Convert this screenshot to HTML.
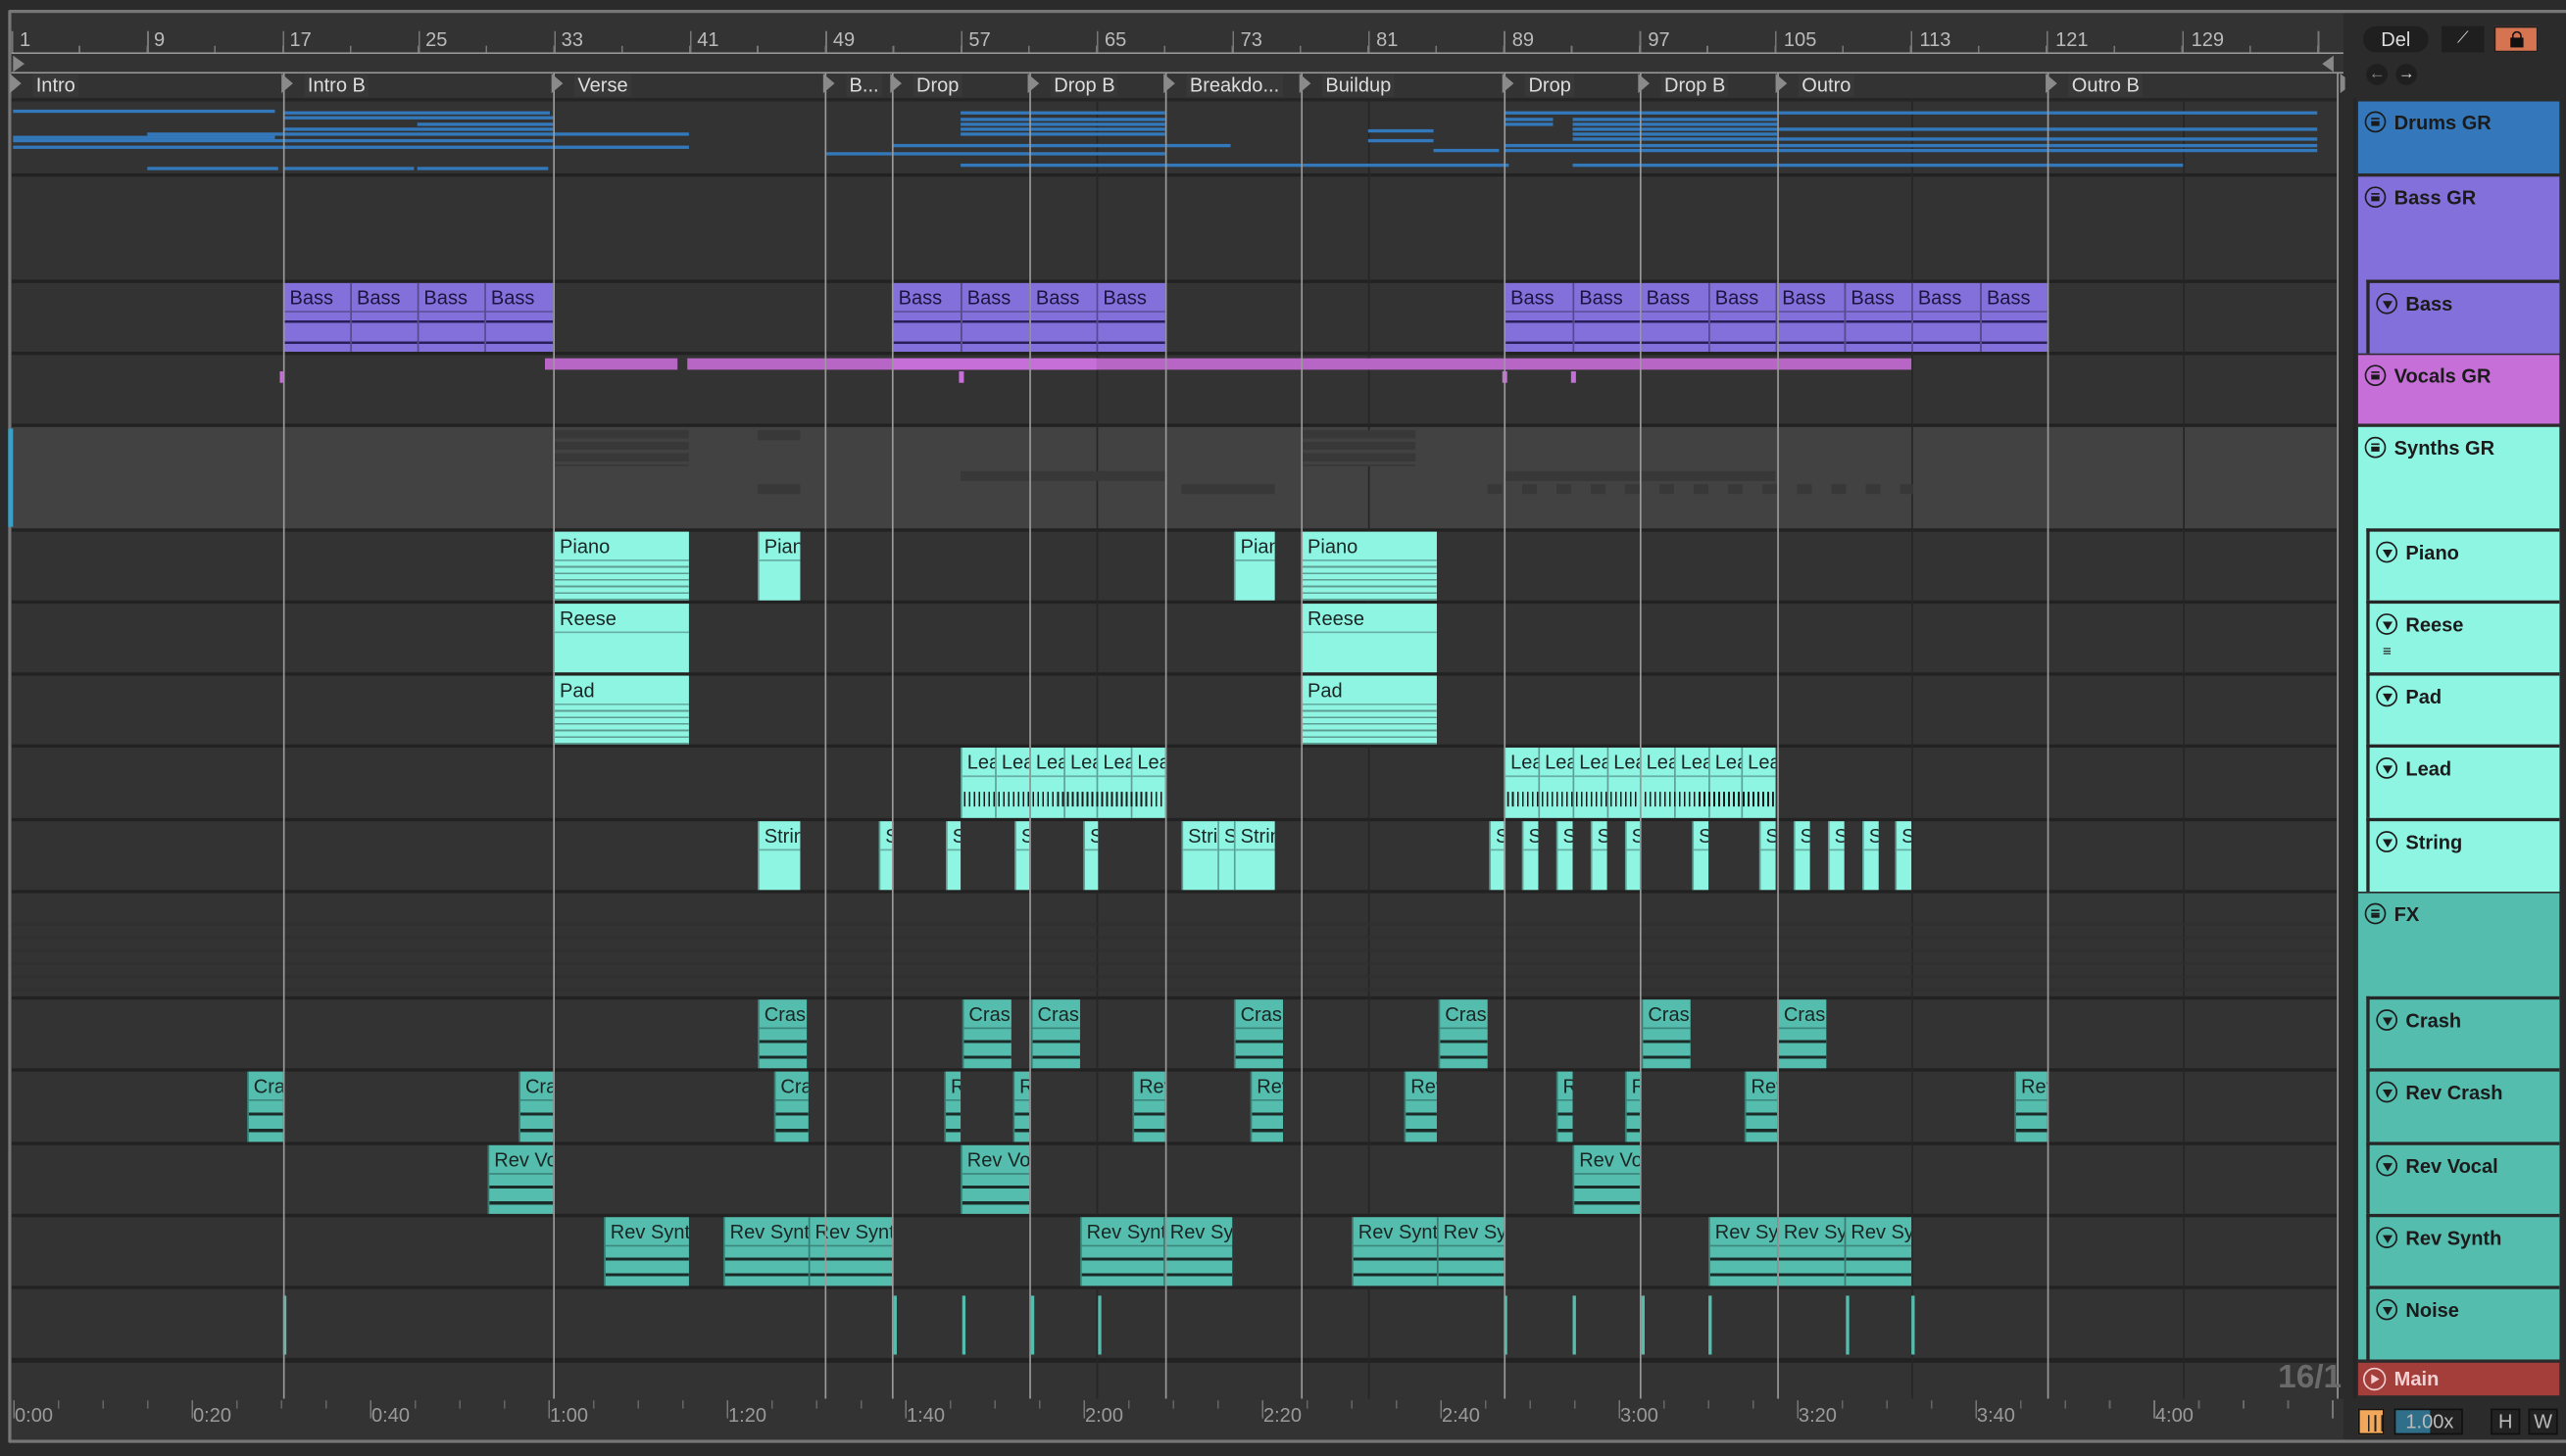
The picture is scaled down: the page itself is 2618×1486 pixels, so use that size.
<!DOCTYPE html>
<html><head><meta charset="utf-8"><style>
*{margin:0;padding:0}
html,body{width:2618px;height:1486px;overflow:hidden;background:#2b2b2b}
#s{position:absolute;left:0;top:0;width:1568px;height:890px;transform:scale(1.66964,1.66966);transform-origin:0 0;background:#2b2b2b;font-family:"Liberation Sans",sans-serif}
.a{position:absolute}
.t{position:absolute;left:7px;width:1421px;background:#333}
.c{position:absolute;box-sizing:border-box;border-left:1px solid rgba(0,0,0,.35);overflow:hidden;font-size:12px;color:#1a2624}
.c .h{height:17px;line-height:18px;padding-left:3px;border-bottom:1px solid rgba(0,0,0,.28);white-space:nowrap;overflow:hidden}
.c .b{height:calc(100% - 18px)!important}
.sy{background:#8ff5e3}
.sy .b{background:repeating-linear-gradient(180deg,transparent 0 3px,#5e9e92 3px 4px)}
.fx{background:#55bdae}
.fx .b{background:linear-gradient(180deg,transparent 0 28%,#1a2b28 28% 36%,transparent 36% 68%,#1a2b28 68% 76%,transparent 76%)}
.bs{background:#8470da;color:#1d1540}
.bs .b{background:linear-gradient(180deg,transparent 0 20%,#2a1f5a 20% 26%,transparent 26% 74%,#2a1f5a 74% 80%,transparent 80%)}
.r1{top:173px;height:42px}
.rp{top:325px;height:42px}.rr{top:369px;height:42px}.rd{top:413px;height:42px}.rl{top:457px;height:43px}.rs{top:502px;height:42px}
.rc{top:611px;height:42px}.rx{top:655px;height:43px}.rv{top:700px;height:42px}.ry{top:744px;height:42px}.rn{top:788px;height:42px}
.vl{position:absolute;top:44px;height:811px;width:1px;background:#9a9a9a}
.gl{position:absolute;top:60px;height:795px;width:1px;background:#262626}
.bl{position:absolute;height:2px;background:#3278bb}
.hd{position:absolute;box-sizing:border-box;font-size:12px;font-weight:bold;color:#1b1b1b}
.hd span{position:absolute;left:22px;top:6px}
.ic{position:absolute;left:4px;top:6px;width:11px;height:11px;border:1.3px solid #1b1b1b;border-radius:50%}
.ic.g::after{content:"";position:absolute;left:3px;top:3px;width:5px;height:1px;border-top:1px solid #1b1b1b;border-bottom:1px solid #1b1b1b;box-shadow:0 2px 0 #1b1b1b}
.ic.d::after{content:"";position:absolute;left:2.5px;top:3.5px;border-left:3px solid transparent;border-right:3px solid transparent;border-top:5px solid #1b1b1b}
.lc{position:absolute;top:45px;font-size:12px;color:#ddd;height:13px;line-height:14px}
.lc::before{content:"";position:absolute;left:-1px;top:0;border-top:6px solid transparent;border-bottom:6px solid transparent;border-left:7px solid #8a8a8a}
.lc i{font-style:normal;margin-left:13px;background:#383838;padding:0 2px}
.rn2{position:absolute;top:17px;font-size:12px;color:#bbb}
.tm{position:absolute;top:858px;font-size:12px;color:#9a9a9a}
.sl{position:absolute;top:792px;width:2px;height:36px;background:#55bdae}
</style></head><body><div id="s">
<div class="a" style="left:6px;top:6px;width:1562px;height:2px;background:#777"></div>
<div class="a" style="left:5px;top:6px;width:2px;height:876px;background:#777;border-radius:2px"></div>
<div class="a" style="left:6px;top:880px;width:1562px;height:2px;background:#777"></div>
<div class="a" style="left:7px;top:8px;width:1425px;height:24px;background:#333"></div>
<div class="a" style="left:7px;top:19px;width:1421px;height:13px;background:repeating-linear-gradient(90deg,#777 0 1px,transparent 1px 82.9px);background-position:0 0"></div>
<div class="a" style="left:48px;top:28px;width:1380px;height:4px;background:repeating-linear-gradient(90deg,#777 0 1px,transparent 1px 41.45px)"></div>
<div class="a" style="left:7px;top:32px;width:1425px;height:1px;background:#999"></div>
<div class="a" style="left:7px;top:33px;width:1425px;height:11px;background:#333"></div>
<div class="a" style="left:7px;top:44px;width:1425px;height:1px;background:#999"></div>
<div class="a" style="left:7px;top:45px;width:1421px;height:15px;background:#333"></div>
<div class="a" style="left:7px;top:60px;width:1421px;height:2px;background:#252525"></div>
<div class="a" style="left:8px;top:34px;border-top:5px solid transparent;border-bottom:5px solid transparent;border-left:7px solid #888"></div>
<div class="a" style="left:1419px;top:34px;border-top:5px solid transparent;border-bottom:5px solid transparent;border-right:7px solid #888"></div>
<div class="a" style="left:1430px;top:45px;border-top:6px solid transparent;border-bottom:6px solid transparent;border-left:8px solid #888"></div>
<span class="rn2" style="left:12px">1</span><span class="rn2" style="left:94px">9</span><span class="rn2" style="left:177px">17</span><span class="rn2" style="left:260px">25</span><span class="rn2" style="left:343px">33</span><span class="rn2" style="left:426px">41</span><span class="rn2" style="left:509px">49</span><span class="rn2" style="left:592px">57</span><span class="rn2" style="left:675px">65</span><span class="rn2" style="left:758px">73</span><span class="rn2" style="left:841px">81</span><span class="rn2" style="left:924px">89</span><span class="rn2" style="left:1007px">97</span><span class="rn2" style="left:1090px">105</span><span class="rn2" style="left:1173px">113</span><span class="rn2" style="left:1256px">121</span><span class="rn2" style="left:1339px">129</span>
<div class="a" style="left:7px;top:62px;width:1421px;height:793px;background:#222"></div>
<div class="t" style="top:62px;height:44px"></div>
<div class="t" style="top:108px;height:63px"></div>
<div class="t" style="top:173px;height:42px"></div>
<div class="t" style="top:217px;height:42px"></div>
<div class="t" style="top:261px;height:62px;background:#424242"></div>
<div class="t" style="top:325px;height:42px"></div>
<div class="t" style="top:369px;height:42px"></div>
<div class="t" style="top:413px;height:42px"></div>
<div class="t" style="top:457px;height:43px"></div>
<div class="t" style="top:502px;height:42px"></div>
<div class="t" style="top:546px;height:63px"></div>
<div class="t" style="top:611px;height:42px"></div>
<div class="t" style="top:655px;height:43px"></div>
<div class="t" style="top:700px;height:42px"></div>
<div class="t" style="top:744px;height:42px"></div>
<div class="t" style="top:788px;height:42px"></div>
<div class="t" style="top:833px;height:22px"></div>
<div class="a" style="left:5px;top:262px;width:3px;height:60px;background:#3aa0c8"></div>
<div class="gl" style="left:670px"></div><div class="gl" style="left:836px"></div><div class="gl" style="left:1168px"></div><div class="gl" style="left:1334px"></div>
<div class="bl" style="left:8px;top:67px;width:160px"></div><div class="bl" style="left:8px;top:83px;width:160px"></div>
<div class="bl" style="left:173px;top:68px;width:163px"></div><div class="bl" style="left:173px;top:71px;width:165px"></div><div class="bl" style="left:255px;top:75px;width:83px"></div><div class="bl" style="left:173px;top:78px;width:165px"></div><div class="bl" style="left:90px;top:81px;width:331px"></div><div class="bl" style="left:8px;top:85px;width:330px"></div><div class="bl" style="left:8px;top:89px;width:413px"></div><div class="bl" style="left:90px;top:102px;width:80px"></div><div class="bl" style="left:173px;top:102px;width:80px"></div><div class="bl" style="left:255px;top:102px;width:80px"></div>
<div class="bl" style="left:505px;top:93px;width:40px"></div>
<div class="bl" style="left:587px;top:68px;width:125px"></div><div class="bl" style="left:587px;top:72px;width:125px"></div><div class="bl" style="left:587px;top:75px;width:125px"></div><div class="bl" style="left:587px;top:78px;width:125px"></div><div class="bl" style="left:587px;top:81px;width:125px"></div><div class="bl" style="left:545px;top:88px;width:167px"></div><div class="bl" style="left:545px;top:93px;width:167px"></div><div class="bl" style="left:587px;top:100px;width:335px"></div>
<div class="bl" style="left:712px;top:88px;width:40px"></div><div class="bl" style="left:836px;top:79px;width:40px"></div><div class="bl" style="left:836px;top:85px;width:40px"></div><div class="bl" style="left:876px;top:91px;width:40px"></div>
<div class="bl" style="left:919px;top:68px;width:497px"></div><div class="bl" style="left:919px;top:72px;width:30px"></div><div class="bl" style="left:961px;top:72px;width:125px"></div><div class="bl" style="left:919px;top:75px;width:30px"></div><div class="bl" style="left:961px;top:75px;width:125px"></div><div class="bl" style="left:961px;top:78px;width:455px"></div><div class="bl" style="left:961px;top:81px;width:125px"></div><div class="bl" style="left:961px;top:84px;width:455px"></div><div class="bl" style="left:919px;top:88px;width:497px"></div><div class="bl" style="left:919px;top:91px;width:497px"></div><div class="bl" style="left:961px;top:100px;width:373px"></div>
<div class="a" style="left:338px;top:263px;width:83px;height:22px;background:repeating-linear-gradient(180deg,#383838 0 5px,#424242 5px 7px)"></div>
<div class="a" style="left:463px;top:263px;width:26px;height:6px;background:#383838"></div>
<div class="a" style="left:463px;top:296px;width:26px;height:6px;background:#383838"></div>
<div class="a" style="left:587px;top:288px;width:125px;height:6px;background:#383838"></div>
<div class="a" style="left:722px;top:296px;width:57px;height:6px;background:#383838"></div>
<div class="a" style="left:795px;top:263px;width:70px;height:22px;background:repeating-linear-gradient(180deg,#383838 0 5px,#424242 5px 7px)"></div>
<div class="a" style="left:919px;top:288px;width:166px;height:6px;background:#383838"></div>
<div class="a" style="left:909px;top:296px;width:260px;height:6px;background:repeating-linear-gradient(90deg,#383838 0 9px,transparent 9px 21px)"></div>
<div class="a" style="left:7px;top:558px;width:1421px;height:48px;background:repeating-linear-gradient(180deg,transparent 0 6px,#2e2e2e 6px 8px);opacity:.7"></div>
<div class="a" style="left:333px;top:219px;width:81px;height:7px;background:#b766c6"></div>
<div class="a" style="left:420px;top:219px;width:748px;height:7px;background:#b766c6"></div>
<div class="a" style="left:545px;top:219px;width:125px;height:7px;background:#c76fd9"></div>
<div class="a" style="left:171px;top:227px;width:2px;height:7px;background:#c76fd9"></div><div class="a" style="left:586px;top:227px;width:3px;height:7px;background:#c76fd9"></div><div class="a" style="left:918px;top:227px;width:3px;height:7px;background:#c76fd9"></div><div class="a" style="left:960px;top:227px;width:3px;height:7px;background:#c76fd9"></div>
<div class="c bs r1" style="left:173px;width:42px"><div class="h">Bass</div><div class="b"></div></div>
<div class="c bs r1" style="left:214px;width:42px"><div class="h">Bass</div><div class="b"></div></div>
<div class="c bs r1" style="left:255px;width:42px"><div class="h">Bass</div><div class="b"></div></div>
<div class="c bs r1" style="left:296px;width:42px"><div class="h">Bass</div><div class="b"></div></div>
<div class="c bs r1" style="left:545px;width:42px"><div class="h">Bass</div><div class="b"></div></div>
<div class="c bs r1" style="left:587px;width:42px"><div class="h">Bass</div><div class="b"></div></div>
<div class="c bs r1" style="left:629px;width:42px"><div class="h">Bass</div><div class="b"></div></div>
<div class="c bs r1" style="left:670px;width:42px"><div class="h">Bass</div><div class="b"></div></div>
<div class="c bs r1" style="left:919px;width:42px"><div class="h">Bass</div><div class="b"></div></div>
<div class="c bs r1" style="left:961px;width:42px"><div class="h">Bass</div><div class="b"></div></div>
<div class="c bs r1" style="left:1002px;width:42px"><div class="h">Bass</div><div class="b"></div></div>
<div class="c bs r1" style="left:1044px;width:42px"><div class="h">Bass</div><div class="b"></div></div>
<div class="c bs r1" style="left:1085px;width:42px"><div class="h">Bass</div><div class="b"></div></div>
<div class="c bs r1" style="left:1127px;width:42px"><div class="h">Bass</div><div class="b"></div></div>
<div class="c bs r1" style="left:1168px;width:42px"><div class="h">Bass</div><div class="b"></div></div>
<div class="c bs r1" style="left:1210px;width:41px"><div class="h">Bass</div><div class="b"></div></div>
<div class="c sy rp" style="left:338px;width:83px"><div class="h">Piano</div><div class="b"></div></div>
<div class="c sy rp" style="left:463px;width:26px"><div class="h">Piano</div></div>
<div class="c sy rp" style="left:754px;width:25px"><div class="h">Piano</div></div>
<div class="c sy rp" style="left:795px;width:83px"><div class="h">Piano</div><div class="b"></div></div>
<div class="c sy rr" style="left:338px;width:83px"><div class="h">Reese</div></div>
<div class="c sy rr" style="left:795px;width:83px"><div class="h">Reese</div></div>
<div class="c sy rd" style="left:338px;width:83px"><div class="h">Pad</div><div class="b"></div></div>
<div class="c sy rd" style="left:795px;width:83px"><div class="h">Pad</div><div class="b"></div></div>
<div class="c sy rl" style="left:587px;width:22px"><div class="h">Lead</div></div><div class="c sy rl" style="left:608px;width:22px"><div class="h">Lead</div></div><div class="c sy rl" style="left:629px;width:22px"><div class="h">Lead</div></div><div class="c sy rl" style="left:650px;width:21px"><div class="h">Lead</div></div><div class="c sy rl" style="left:670px;width:22px"><div class="h">Lead</div></div><div class="c sy rl" style="left:691px;width:21px"><div class="h">Lead</div></div>
<div class="c sy rl" style="left:919px;width:22px"><div class="h">Lead</div></div><div class="c sy rl" style="left:940px;width:22px"><div class="h">Lead</div></div><div class="c sy rl" style="left:961px;width:22px"><div class="h">Lead</div></div><div class="c sy rl" style="left:982px;width:21px"><div class="h">Lead</div></div><div class="c sy rl" style="left:1002px;width:22px"><div class="h">Lead</div></div><div class="c sy rl" style="left:1023px;width:22px"><div class="h">Lead</div></div><div class="c sy rl" style="left:1044px;width:21px"><div class="h">Lead</div></div><div class="c sy rl" style="left:1064px;width:21px"><div class="h">Lead</div></div>
<div class="a" style="left:589px;top:484px;width:122px;height:9px;background:repeating-linear-gradient(90deg,#1a1a1a 0 1px,transparent 1px 3px)"></div>
<div class="a" style="left:921px;top:484px;width:163px;height:9px;background:repeating-linear-gradient(90deg,#1a1a1a 0 1px,transparent 1px 3px)"></div>
<div class="c sy rs" style="left:463px;width:26px"><div class="h">String</div></div>
<div class="c sy rs" style="left:537px;width:9px"><div class="h">S</div></div><div class="c sy rs" style="left:578px;width:9px"><div class="h">S</div></div><div class="c sy rs" style="left:620px;width:9px"><div class="h">S</div></div><div class="c sy rs" style="left:662px;width:9px"><div class="h">S</div></div>
<div class="c sy rs" style="left:722px;width:23px"><div class="h">String</div></div><div class="c sy rs" style="left:744px;width:11px"><div class="h">S</div></div><div class="c sy rs" style="left:754px;width:25px"><div class="h">String</div></div>
<div class="c sy rs" style="left:910px;width:9px"><div class="h">S</div></div><div class="c sy rs" style="left:930px;width:10px"><div class="h">S</div></div><div class="c sy rs" style="left:951px;width:10px"><div class="h">S</div></div><div class="c sy rs" style="left:972px;width:10px"><div class="h">S</div></div><div class="c sy rs" style="left:993px;width:9px"><div class="h">S</div></div><div class="c sy rs" style="left:1034px;width:10px"><div class="h">S</div></div><div class="c sy rs" style="left:1075px;width:10px"><div class="h">S</div></div><div class="c sy rs" style="left:1096px;width:10px"><div class="h">S</div></div><div class="c sy rs" style="left:1117px;width:10px"><div class="h">S</div></div><div class="c sy rs" style="left:1138px;width:10px"><div class="h">S</div></div><div class="c sy rs" style="left:1158px;width:10px"><div class="h">S</div></div>
<div class="c fx rc" style="left:463px;width:30px"><div class="h">Crash</div><div class="b"></div></div><div class="c fx rc" style="left:588px;width:30px"><div class="h">Crash</div><div class="b"></div></div><div class="c fx rc" style="left:630px;width:30px"><div class="h">Crash</div><div class="b"></div></div><div class="c fx rc" style="left:754px;width:30px"><div class="h">Crash</div><div class="b"></div></div><div class="c fx rc" style="left:879px;width:30px"><div class="h">Crash</div><div class="b"></div></div><div class="c fx rc" style="left:1003px;width:30px"><div class="h">Crash</div><div class="b"></div></div><div class="c fx rc" style="left:1086px;width:30px"><div class="h">Crash</div><div class="b"></div></div>
<div class="c fx rx" style="left:151px;width:22px"><div class="h">Crash</div><div class="b"></div></div><div class="c fx rx" style="left:317px;width:21px"><div class="h">Crash</div><div class="b"></div></div><div class="c fx rx" style="left:473px;width:21px"><div class="h">Crash</div><div class="b"></div></div><div class="c fx rx" style="left:577px;width:10px"><div class="h">R</div><div class="b"></div></div><div class="c fx rx" style="left:619px;width:10px"><div class="h">R</div><div class="b"></div></div><div class="c fx rx" style="left:692px;width:20px"><div class="h">Rev</div><div class="b"></div></div><div class="c fx rx" style="left:764px;width:20px"><div class="h">Rev</div><div class="b"></div></div><div class="c fx rx" style="left:858px;width:20px"><div class="h">Rev</div><div class="b"></div></div><div class="c fx rx" style="left:951px;width:10px"><div class="h">R</div><div class="b"></div></div><div class="c fx rx" style="left:993px;width:10px"><div class="h">R</div><div class="b"></div></div><div class="c fx rx" style="left:1066px;width:20px"><div class="h">Rev</div><div class="b"></div></div><div class="c fx rx" style="left:1231px;width:20px"><div class="h">Rev</div><div class="b"></div></div>
<div class="c fx rv" style="left:298px;width:40px"><div class="h">Rev Vocal</div><div class="b"></div></div><div class="c fx rv" style="left:587px;width:42px"><div class="h">Rev Vocal</div><div class="b"></div></div><div class="c fx rv" style="left:961px;width:41px"><div class="h">Rev Vocal</div><div class="b"></div></div>
<div class="c fx ry" style="left:369px;width:52px"><div class="h">Rev Synth</div><div class="b"></div></div><div class="c fx ry" style="left:442px;width:53px"><div class="h">Rev Synth</div><div class="b"></div></div><div class="c fx ry" style="left:494px;width:52px"><div class="h">Rev Synth</div><div class="b"></div></div><div class="c fx ry" style="left:660px;width:52px"><div class="h">Rev Synth</div><div class="b"></div></div><div class="c fx ry" style="left:711px;width:42px"><div class="h">Rev Synth</div><div class="b"></div></div><div class="c fx ry" style="left:826px;width:53px"><div class="h">Rev Synth</div><div class="b"></div></div><div class="c fx ry" style="left:878px;width:41px"><div class="h">Rev Synth</div><div class="b"></div></div><div class="c fx ry" style="left:1044px;width:42px"><div class="h">Rev Synth</div><div class="b"></div></div><div class="c fx ry" style="left:1086px;width:42px"><div class="h">Rev Synth</div><div class="b"></div></div><div class="c fx ry" style="left:1127px;width:41px"><div class="h">Rev Synth</div><div class="b"></div></div>
<div class="sl" style="left:173px"></div><div class="sl" style="left:546px"></div><div class="sl" style="left:588px"></div><div class="sl" style="left:630px"></div><div class="sl" style="left:671px"></div><div class="sl" style="left:919px"></div><div class="sl" style="left:961px"></div><div class="sl" style="left:1003px"></div><div class="sl" style="left:1044px"></div><div class="sl" style="left:1128px"></div><div class="sl" style="left:1168px"></div>
<div class="vl" style="left:173px"></div><div class="vl" style="left:338px"></div><div class="vl" style="left:504px"></div><div class="vl" style="left:545px"></div><div class="vl" style="left:629px"></div><div class="vl" style="left:712px"></div><div class="vl" style="left:795px"></div><div class="vl" style="left:919px"></div><div class="vl" style="left:1002px"></div><div class="vl" style="left:1086px"></div><div class="vl" style="left:1251px"></div><div class="vl" style="left:1428px"></div>
<span class="lc" style="left:7px"><i>Intro</i></span><span class="lc" style="left:173px"><i>Intro B</i></span><span class="lc" style="left:338px"><i>Verse</i></span><span class="lc" style="left:504px"><i>B...</i></span><span class="lc" style="left:545px"><i>Drop</i></span><span class="lc" style="left:629px"><i>Drop B</i></span><span class="lc" style="left:712px"><i>Breakdo...</i></span><span class="lc" style="left:795px"><i>Buildup</i></span><span class="lc" style="left:919px"><i>Drop</i></span><span class="lc" style="left:1002px"><i>Drop B</i></span><span class="lc" style="left:1086px"><i>Outro</i></span><span class="lc" style="left:1251px"><i>Outro B</i></span>
<div class="a" style="left:7px;top:855px;width:1425px;height:25px;background:#333"></div>
<div class="a" style="left:8px;top:856px;width:1420px;height:5px;background:repeating-linear-gradient(90deg,#666 0 1px,transparent 1px 27.25px)"></div>
<div class="a" style="left:8px;top:856px;width:1420px;height:11px;background:repeating-linear-gradient(90deg,#777 0 1px,transparent 1px 109px)"></div>
<span class="tm" style="left:9px">0:00</span><span class="tm" style="left:118px">0:20</span><span class="tm" style="left:227px">0:40</span><span class="tm" style="left:336px">1:00</span><span class="tm" style="left:445px">1:20</span><span class="tm" style="left:554px">1:40</span><span class="tm" style="left:663px">2:00</span><span class="tm" style="left:772px">2:20</span><span class="tm" style="left:881px">2:40</span><span class="tm" style="left:990px">3:00</span><span class="tm" style="left:1099px">3:20</span><span class="tm" style="left:1208px">3:40</span><span class="tm" style="left:1317px">4:00</span>
<div class="a" style="left:1392px;top:831px;font-size:20px;font-weight:bold;color:#6a6a6a">16/1</div>
<div class="a" style="left:1433px;top:8px;width:135px;height:872px;background:#2b2b2b"></div>
<div class="a" style="left:1438px;top:60px;width:2px;height:795px;background:#262626"></div>
<div class="a" style="left:1444px;top:16px;width:40px;height:16px;border-radius:8px;background:#1f1f1f;color:#ddd;font-size:12px;text-align:center;line-height:16px">Del</div>
<div class="a" style="left:1492px;top:16px;width:26px;height:16px;background:#1f1f1f;color:#ddd;font-size:10px;text-align:center;line-height:16px">⟋</div>
<div class="a" style="left:1524px;top:16px;width:27px;height:16px;background:#d67451;border:1px solid #1f1f1f;box-sizing:border-box"><div class="a" style="left:9px;top:6px;width:8px;height:6px;background:#111"></div><div class="a" style="left:10px;top:2px;width:4px;height:5px;border:1.5px solid #111;border-bottom:none;border-radius:3px 3px 0 0"></div></div>
<div class="a" style="left:1446px;top:39px;width:13px;height:13px;border-radius:50%;background:#1f1f1f;color:#888;font-size:10px;text-align:center;line-height:13px">←</div>
<div class="a" style="left:1464px;top:39px;width:13px;height:13px;border-radius:50%;background:#1f1f1f;color:#ddd;font-size:10px;text-align:center;line-height:13px">→</div>
<div class="hd" style="left:1441px;top:62px;width:123px;height:44px;background:#3478bb"><div class="ic g"></div><span>Drums GR</span></div>
<div class="hd" style="left:1441px;top:108px;width:123px;height:108px;background:#8470da"><div class="ic g"></div><span>Bass GR</span></div>
<div class="hd" style="left:1446px;top:171px;width:118px;height:45px;background:#8470da;border-left:2px solid #262626;border-top:2px solid #262626"><div class="ic d"></div><span>Bass</span></div>
<div class="hd" style="left:1441px;top:217px;width:123px;height:42px;background:#c76fd9"><div class="ic g"></div><span>Vocals GR</span></div>
<div class="hd" style="left:1441px;top:261px;width:123px;height:284px;background:#8ff5e3"><div class="ic g"></div><span>Synths GR</span></div>
<div class="hd" style="left:1446px;top:323px;width:118px;height:44px;background:#8ff5e3;border-left:2px solid #262626;border-top:2px solid #262626"><div class="ic d"></div><span>Piano</span></div>
<div class="hd" style="left:1446px;top:367px;width:118px;height:44px;background:#8ff5e3;border-left:2px solid #262626;border-top:2px solid #262626"><div class="ic d"></div><span>Reese</span><b style="position:absolute;left:8px;top:24px;font-size:9px">≡</b></div>
<div class="hd" style="left:1446px;top:411px;width:118px;height:44px;background:#8ff5e3;border-left:2px solid #262626;border-top:2px solid #262626"><div class="ic d"></div><span>Pad</span></div>
<div class="hd" style="left:1446px;top:455px;width:118px;height:45px;background:#8ff5e3;border-left:2px solid #262626;border-top:2px solid #262626"><div class="ic d"></div><span>Lead</span></div>
<div class="hd" style="left:1446px;top:500px;width:118px;height:45px;background:#8ff5e3;border-left:2px solid #262626;border-top:2px solid #262626"><div class="ic d"></div><span>String</span></div>
<div class="hd" style="left:1441px;top:546px;width:123px;height:285px;background:#55bdae"><div class="ic g"></div><span>FX</span></div>
<div class="hd" style="left:1446px;top:609px;width:118px;height:44px;background:#55bdae;border-left:2px solid #262626;border-top:2px solid #262626"><div class="ic d"></div><span>Crash</span></div>
<div class="hd" style="left:1446px;top:653px;width:118px;height:45px;background:#55bdae;border-left:2px solid #262626;border-top:2px solid #262626"><div class="ic d"></div><span>Rev Crash</span></div>
<div class="hd" style="left:1446px;top:698px;width:118px;height:44px;background:#55bdae;border-left:2px solid #262626;border-top:2px solid #262626"><div class="ic d"></div><span>Rev Vocal</span></div>
<div class="hd" style="left:1446px;top:742px;width:118px;height:44px;background:#55bdae;border-left:2px solid #262626;border-top:2px solid #262626"><div class="ic d"></div><span>Rev Synth</span></div>
<div class="hd" style="left:1446px;top:786px;width:118px;height:45px;background:#55bdae;border-left:2px solid #262626;border-top:2px solid #262626"><div class="ic d"></div><span>Noise</span></div>
<div class="hd" style="left:1441px;top:833px;width:123px;height:20px;background:#a33e3a;color:#f0d0d0"><div class="a" style="left:3px;top:3px;width:12px;height:12px;border:1.3px solid #f0d0d0;border-radius:50%"><div class="a" style="left:4px;top:2.5px;border-top:3.5px solid transparent;border-bottom:3.5px solid transparent;border-left:5px solid #f0d0d0"></div></div><span style="top:3px">Main</span></div>
<div class="a" style="left:1441px;top:861px;width:16px;height:16px;background:#f2a85a;border:1px solid #111;box-sizing:border-box;background-image:repeating-linear-gradient(90deg,transparent 0 3px,#222 3px 4px);background-size:12px 10px;background-position:2px 3px;background-repeat:no-repeat"></div>
<div class="a" style="left:1463px;top:861px;width:42px;height:16px;background:#222;border:1px solid #111;box-sizing:border-box;color:#bbb;font-size:12px;line-height:14px;padding-left:6px"><div class="a" style="left:0;top:0;width:21px;height:14px;background:#2f6f8a"></div><span style="position:relative">1.00x</span></div>
<div class="a" style="left:1522px;top:861px;width:18px;height:16px;background:#222;border:1px solid #111;box-sizing:border-box;color:#bbb;font-size:12px;line-height:14px;text-align:center">H</div>
<div class="a" style="left:1545px;top:861px;width:18px;height:16px;background:#222;border:1px solid #111;box-sizing:border-box;color:#bbb;font-size:12px;line-height:14px;text-align:center">W</div>
</div></body></html>
